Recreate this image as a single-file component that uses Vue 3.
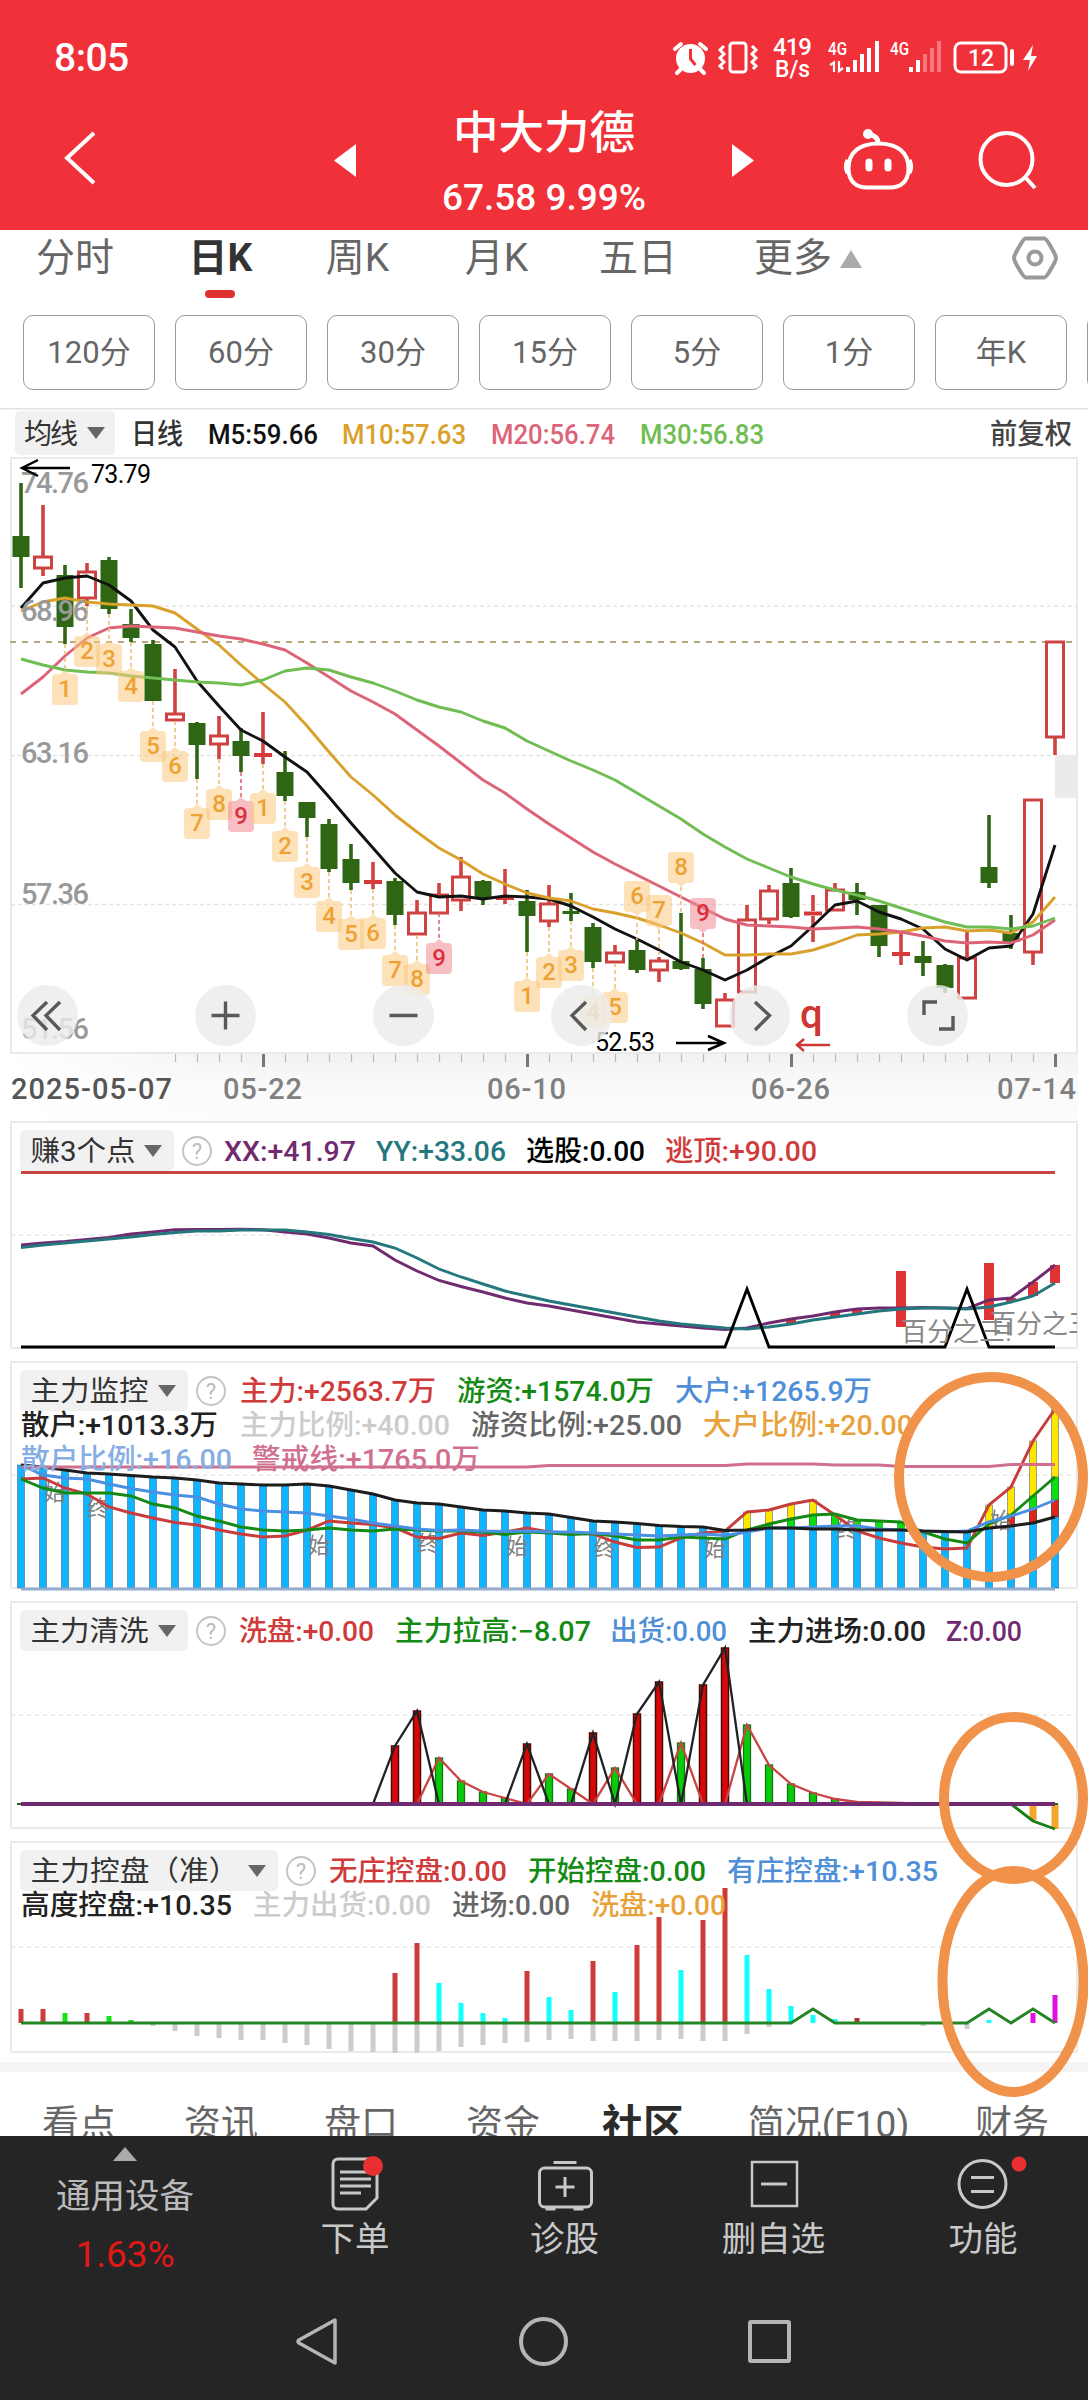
<script setup>
const n = 48
const X = (k) => 21 + 22 * k
const line = (a) => a.map((y, k) => `${X(k)},${y}`).join(' ')

// wick top, wick bottom, body top, body bottom, rising
const candles = [
  [483, 588, 536, 557, 0], [505, 576, 557, 568, 1], [565, 644, 575, 627, 0], [563, 606, 572, 598, 1],
  [557, 614, 560, 609, 0], [609, 642, 624, 638, 0], [640, 701, 644, 701, 0], [669, 721, 714, 720, 1],
  [722, 779, 723, 745, 0], [716, 759, 736, 744, 1], [728, 772, 741, 756, 0], [712, 764, 754, 756, 1],
  [751, 801, 772, 796, 0], [802, 837, 802, 818, 0], [819, 872, 824, 869, 0], [844, 890, 859, 883, 0],
  [862, 889, 881, 883, 1], [878, 925, 881, 915, 0], [900, 935, 913, 934, 1], [883, 913, 895, 913, 1],
  [857, 911, 877, 900, 1], [880, 905, 881, 898, 0], [869, 904, 897, 899, 1], [890, 952, 901, 916, 0],
  [885, 927, 904, 921, 1], [893, 921, 911, 914, 0], [923, 968, 927, 962, 0], [945, 963, 953, 962, 1],
  [940, 973, 950, 970, 0], [957, 982, 961, 970, 1], [913, 970, 961, 969, 0], [958, 1009, 969, 1004, 0],
  [993, 1027, 1000, 1026, 1], [905, 993, 920, 992, 1], [885, 924, 891, 919, 1], [868, 918, 883, 917, 0],
  [895, 942, 911, 916, 1], [883, 911, 890, 910, 1], [883, 915, 892, 900, 0], [905, 957, 905, 946, 0],
  [931, 965, 952, 956, 1], [941, 976, 956, 963, 0], [964, 993, 965, 988, 0], [932, 999, 958, 998, 1],
  [815, 888, 867, 883, 0], [915, 949, 933, 942, 0], [799, 965, 800, 952, 1], [641, 755, 642, 737, 1],
]
const ma = [
  ['#111', [608, 583, 578, 576, 585, 601, 630, 647, 681, 706, 730, 741, 757, 772, 797, 823, 848, 873, 892, 897, 896, 899, 896, 897, 899, 906, 917, 929, 939, 950, 962, 970, 980, 970, 957, 946, 926, 905, 901, 912, 919, 929, 949, 960, 948, 946, 914, 845]],
  ['#d9a02b', [611, 602, 598, 602, 604, 605, 606, 613, 629, 645, 665, 684, 702, 726, 752, 777, 795, 815, 832, 848, 860, 874, 884, 893, 898, 901, 909, 913, 918, 925, 933, 943, 955, 955, 954, 954, 950, 943, 935, 934, 932, 928, 927, 931, 930, 933, 922, 897]],
  ['#dd6478', [694, 677, 656, 638, 628, 626, 627, 628, 632, 636, 639, 644, 650, 663, 677, 691, 702, 714, 730, 746, 763, 780, 793, 809, 824, 838, 852, 864, 875, 886, 897, 908, 919, 925, 926, 927, 929, 928, 927, 929, 932, 936, 941, 943, 942, 943, 935, 920]],
  ['#6fbd53', [659, 665, 670, 672, 673, 676, 678, 680, 682, 683, 685, 680, 671, 668, 670, 677, 683, 691, 700, 707, 712, 721, 728, 741, 751, 761, 770, 780, 793, 806, 819, 834, 847, 859, 868, 877, 884, 890, 895, 901, 908, 915, 922, 927, 927, 929, 926, 918]],
]
// candle index, box bottom, digit
const below = [
  [2, 705, 1], [3, 667, 2], [4, 675, 3], [5, 702, 4], [6, 762, 5], [7, 782, 6], [8, 839, 7], [9, 820, 8], [10, 832, 9],
  [11, 824, 1], [12, 862, 2], [13, 898, 3], [14, 932, 4], [15, 950, 5], [16, 949, 6], [17, 986, 7], [18, 995, 8], [19, 974, 9],
  [23, 1012, 1], [24, 988, 2], [25, 981, 3], [26, 1028, 4], [27, 1023, 5],
]
const above = [[28, 912, 6], [29, 926, 7], [30, 883, 8], [31, 929, 9]]
const tags = [
  ...below.map(([k, b, d]) => ({ x: X(k), b, d, y1: candles[k][1], y2: b - 34, tip: `M-5 ${b - 31}L0 ${b - 35}L5 ${b - 31}z` })),
  ...above.map(([k, b, d]) => ({ x: X(k), b, d, y1: b + 4, y2: candles[k][0], tip: `M-5 ${b}L0 ${b + 4}L5 ${b}z` })),
]
const prices = [['74.76', 493], ['68.96', 621], ['63.16', 763], ['57.36', 904], ['51.56', 1039]]
const dates = [['2025-05-07', 11, 161, '#555'], ['05-22', 223, 79, '#808080'], ['06-10', 487, 79, '#808080'], ['06-26', 751, 79, '#808080'], ['07-14', 997, 79, '#808080']]
const ticks = Array.from({ length: n - 7 }, (_, i) => i + 7)

const R = '#cf3a3a', G = '#148a14', B = '#4f8fd8', K = '#222', P = '#702a70', LG = '#ccc', DG = '#666', O = '#e8a23c'
const maLegend = [['日线', 131, 52, '#333'], ['M5:59.66', 208, 110, '#111'], ['M10:57.63', 342, 124, '#d9a02b'], ['M20:56.74', 491, 124, '#dd6478'], ['M30:56.83', 640, 124, '#6fbd53'], ['前复权', 990, 82, '#444']]

// [text, x, width, baseline, colour]
const panels = [
  { id: 'p1', top: 1121, h: 240, box: 228, grid: 1235, pill: 154, name: '赚3个点', nw: 105,
    legend: [['XX:+41.97', 224, 132, 1161, P], ['YY:+33.06', 376, 130, 1161, '#24777d'], ['选股:0.00', 526, 119, 1161, '#000'], ['逃顶:+90.00', 665, 152, 1161, R]] },
  { id: 'p2', top: 1361, h: 240, box: 228, grid: 1475, pill: 168, name: '主力监控', nw: 118,
    legend: [['主力:+2563.7万', 240, 196, 1401, R], ['游资:+1574.0万', 457, 197, 1401, G], ['大户:+1265.9万', 675, 197, 1401, B],
      ['散户:+1013.3万', 21, 197, 1435, K], ['主力比例:+40.00', 240, 210, 1435, LG], ['游资比例:+25.00', 471, 211, 1435, DG], ['大户比例:+20.00', 703, 210, 1435, O],
      ['散户比例:+16.00', 21, 211, 1469, '#86aee2'], ['警戒线:+1765.0万', 252, 228, 1469, '#d0708e']] },
  { id: 'p3', top: 1601, h: 240, box: 228, grid: 1715, pill: 168, name: '主力清洗', nw: 118,
    legend: [['洗盘:+0.00', 239, 135, 1641, R], ['主力拉高:−8.07', 395, 196, 1641, G], ['出货:0.00', 610, 117, 1641, B], ['主力进场:0.00', 748, 178, 1641, K], ['Z:0.00', 946, 76, 1641, P]] },
  { id: 'p4', top: 1841, h: 221, box: 212, grid: 1947, pill: 258, name: '主力控盘（准）', nw: 208,
    legend: [['无庄控盘:0.00', 329, 178, 1881, R], ['开始控盘:0.00', 528, 178, 1881, G], ['有庄控盘:+10.35', 727, 211, 1881, B],
      ['高度控盘:+10.35', 21, 211, 1915, K], ['主力出货:0.00', 253, 178, 1915, LG], ['进场:0.00', 452, 118, 1915, DG], ['洗盘:+0.00', 591, 135, 1915, O]] },
]

const xx = [1245, 1243, 1241.5, 1239.5, 1237.5, 1234, 1232, 1229.7, 1229.5, 1229.5, 1229.3, 1229.7, 1232, 1234, 1238, 1243, 1246, 1260, 1271, 1280.5, 1286.5, 1292, 1298, 1303, 1306, 1310, 1314, 1318, 1322, 1324, 1326, 1328, 1329.5, 1328, 1323, 1319, 1316, 1312, 1309, 1308, 1308, 1307.5, 1308, 1308.5, 1300, 1298, 1282, 1265]
const yy = [1247.5, 1245, 1243, 1241, 1239, 1237, 1234.5, 1232.5, 1231, 1231, 1230, 1230, 1230, 1232, 1234.5, 1238.5, 1242, 1248, 1258, 1269, 1277, 1284, 1291, 1296, 1301, 1305, 1309, 1313, 1317, 1321, 1324, 1326, 1328, 1329, 1327, 1324, 1320, 1317, 1314, 1311, 1309, 1308, 1308, 1309, 1307, 1302, 1296, 1283]
const peaks = candles.map((_, k) => (k === 33 || k === 43 ? 1289 : 1347))
const gapBars = [[5, 1233, 1238], [35, 1319, 1324], [37, 1312, 1317], [38, 1309, 1314], [40, 1271, 1327], [44, 1263, 1320], [45, 1298, 1302], [46, 1282, 1296], [47, 1265, 1283]]

const retail = [1465, 1467, 1470, 1473, 1474, 1475.5, 1477, 1478, 1480, 1483, 1484, 1485, 1485, 1484, 1486, 1490, 1494, 1500, 1503, 1504, 1507, 1510, 1511, 1513, 1514, 1517.5, 1521, 1522, 1523.5, 1525.5, 1526.5, 1527, 1530.5, 1530, 1528, 1528, 1529, 1529, 1530, 1530, 1530, 1531, 1531.5, 1532, 1528, 1526, 1523, 1517]
const large = [1465, 1475, 1478, 1479, 1484, 1488.5, 1492, 1495, 1497, 1504, 1509, 1511, 1512, 1513, 1516, 1519, 1523, 1526, 1529, 1530.5, 1530, 1531, 1531.5, 1531, 1532, 1532, 1533, 1534, 1535, 1536, 1535, 1534, 1535.5, 1532, 1528, 1528, 1527, 1526, 1526, 1529, 1530, 1531, 1532, 1531, 1522, 1516, 1509, 1500]
const main = [1479, 1478, 1488, 1494, 1507, 1513, 1518, 1522.5, 1525, 1530, 1534, 1537, 1536, 1530, 1521, 1523, 1524.5, 1528, 1537, 1538.5, 1533, 1535.5, 1532, 1528, 1532, 1533, 1534, 1542, 1547.5, 1547, 1538, 1533, 1531, 1512, 1510, 1504, 1500, 1515, 1531, 1538, 1543, 1547, 1549, 1548, 1505, 1487, 1441, 1409]
const hot = [1479, 1488, 1493, 1493, 1493, 1496, 1504, 1508, 1516, 1521, 1527, 1530, 1531, 1530, 1528, 1530, 1531, 1529, 1530, 1531, 1531, 1532, 1534.5, 1532, 1533, 1534.5, 1533.5, 1536, 1540, 1540, 1537, 1538, 1539, 1530, 1524, 1519, 1515, 1514, 1520, 1521, 1522, 1532, 1539, 1543, 1524, 1515, 1496, 1477]
const warn = candles.map((_, k) => (k < 24 ? 1467 : k < 33 ? 1465.5 : k < 37 ? 1464 : k < 40 ? 1465 : k < 45 ? 1466.5 : 1464.5))
const stack = []
for (let k = 0; k < n; k++) {
  const base = retail[k]
  if (main[k] < base) stack.push([k, main[k], base, '#ffe600'])
  if (hot[k] < base && (k < 44 || k > 45)) stack.push([k, hot[k], base, '#0ce00c'])
  if (large[k] < base - 7) stack.push([k, large[k], base, '#e02418'])
  stack.push([k, base, 1588, '#10b4ff'])
}
const marks = [['始', 55, 1500], ['终', 98, 1516], ['始', 319, 1553], ['终', 428, 1551], ['始', 517, 1554], ['终', 605, 1556], ['始', 715, 1556], ['终', 847, 1537], ['始', 1001, 1528]]

const pushes = { 17: 1746, 18: 1711, 23: 1744, 26: 1733, 28: 1714, 29: 1682, 31: 1685, 32: 1648 }
const washes = { 19: 1758, 20: 1781, 21: 1792, 22: 1798, 24: 1774, 25: 1789, 27: 1768, 30: 1743, 33: 1725, 34: 1765, 35: 1784, 36: 1793, 37: 1799, 38: 1802, 39: 1802.5, 40: 1803 }
const pushLine = candles.map((_, k) => pushes[k] ?? 1804)
const washLine = candles.map((_, k) => washes[k] ?? 1804)

const control = [
  [0, 2009, R], [1, 2009, R], [2, 2013, '#12e812'], [3, 2013, R], [4, 2016, '#12e812'], [5, 2020, '#12e812'],
  [17, 1973, R], [18, 1943, R], [23, 1971, R], [26, 1961, R], [28, 1945, R], [29, 1917, R], [31, 1920, R], [32, 1888, R],
  [19, 1983, '#1ff'], [20, 2003, '#1ff'], [21, 2013, '#1ff'], [22, 2018, '#1ff'], [24, 1997, '#1ff'], [25, 2010, '#1ff'], [27, 1992, '#1ff'],
  [30, 1970, '#1ff'], [33, 1955, '#1ff'], [34, 1989, '#1ff'], [35, 2006, '#1ff'], [36, 2015, '#1ff'], [37, 2019, '#1ff'], [44, 2020, '#1ff'],
  [38, 2018, '#a33'], [46, 2013, '#e010e0'], [47, 1995, '#e010e0'],
]
const outflow = { 6: 2026, 7: 2031, 8: 2036, 9: 2038, 10: 2040, 11: 2040, 12: 2043, 13: 2045, 14: 2049, 15: 2051, 16: 2052, 17: 2053, 18: 2053, 19: 2051, 20: 2047, 21: 2045, 22: 2043, 23: 2042, 24: 2040, 25: 2039, 26: 2041, 27: 2041, 28: 2041, 29: 2040, 30: 2039, 31: 2041, 32: 2041, 33: 2034, 34: 2027, 41: 2026, 43: 2029 }
const startLine = candles.map((_, k) => ([36, 44, 46].includes(k) ? 2009 : 2023))

const periods = ['120分', '60分', '30分', '15分', '5分', '1分', '年K', '']
const sections = ['看点', '资讯', '盘口', '资金', '社区', '简况(F10)', '财务']
</script>

<template>
  <div class="page">
    <header class="head">
      <div class="status">
        <span class="time">8:05</span>
        <svg width="428" height="112" viewBox="660 0 428 112" fill="#fff">
          <circle cx="690.500" cy="58.500" r="14.500" />
          <path d="M675 49l6-5M706 49l-6-5M681 69l-4 4M700 69l4 4" stroke="#fff" stroke-width="4" stroke-linecap="round" />
          <path d="M690.500 49v10l5 6" fill="none" stroke="#f13139" stroke-width="3" />
          <rect x="730" y="43" width="16" height="29" rx="3" fill="none" stroke="#fff" stroke-width="3" />
          <path d="M724 46l-4 4 4 4-4 4 4 4-4 4 3 3M752 46l4 4-4 4 4 4-4 4 4 4-3 3" fill="none" stroke="#fff" stroke-width="3" />
          <g class="sb">
            <text x="773" y="55" font-size="24" textLength="39">419</text>
            <text x="775" y="77" font-size="23" textLength="35" lengthAdjust="spacingAndGlyphs">B/s</text>
            <text x="828" y="55" font-size="19" textLength="19" lengthAdjust="spacingAndGlyphs">4G</text>
            <text x="890" y="55" font-size="19" textLength="19" lengthAdjust="spacingAndGlyphs">4G</text>
            <text x="968" y="66" font-size="23" textLength="26">12</text>
          </g>
          <path d="M830 65l4-2.500V72M839 61v10l4-3" stroke="#fff" stroke-width="2.200" fill="none" />
          <path d="M846 67h4v5h-4zM853 60h4v12h-4zM860 54h4v18h-4zM867 48h4v24h-4zM875 41h4v31h-4zM909 67h4v5h-4zM916 60h4v12h-4z" />
          <path opacity=".35" d="M923 54h4v18h-4zM930 48h4v24h-4zM937 41h4v31h-4z" />
          <rect x="955" y="43" width="51" height="29" rx="6" fill="none" stroke="#fff" stroke-width="3" />
          <rect x="1010" y="49" width="4" height="17" rx="2" />
          <path d="M1033 45l-10 15h7l-2 11 9-15h-6z" />
        </svg>
      </div>
      <div class="bar">
        <svg width="160" height="118" viewBox="0 112 160 118"><path d="M94 133L67 158l27 25" fill="none" stroke="#fff" stroke-width="4" /></svg>
        <svg width="240" height="118" viewBox="160 112 240 118"><path d="M334 160.500L356 144v33z" fill="#fff" /></svg>
        <div class="title"><b>中大力德</b><span>67.58 9.99%</span></div>
        <svg width="112" height="118" viewBox="688 112 112 118"><path d="M754 160.500L732 144v33z" fill="#fff" /></svg>
        <svg width="140" height="118" viewBox="800 112 140 118" fill="none" stroke="#fff" stroke-width="4">
          <path d="M878.500 143.500c18 0 30 8 30 25 0 14-9 19-18 19h-24c-9 0-18-5-18-19 0-17 12-25 30-25z" />
          <path d="M848 160c-2 4-2 9 0 13M909 160c2 4 2 9 0 13M878 143c0-5-3-7-9-9" stroke-width="5" />
          <circle cx="868" cy="134" r="3" fill="#fff" />
          <path d="M869 162v6M888 162v6" stroke-width="7" stroke-linecap="round" />
        </svg>
        <svg width="148" height="118" viewBox="940 112 148 118" fill="none" stroke="#fff" stroke-width="4"><circle cx="1006.500" cy="159" r="26" /><path d="M1025 177l10 11" /></svg>
      </div>
    </header>

    <nav class="tabs">
      <span>分时</span><span class="on">日K<i></i></span><span>周K</span><span>月K</span><span>五日</span>
      <span class="more">更多<svg width="22" height="18" viewBox="0 0 22 18"><path d="M11 0L22 18H0z" fill="#aaa" /></svg></span><span></span>
      <svg width="46" height="46" viewBox="-23 -23 46 46" fill="none" stroke="#999" stroke-width="4"><path d="M-9.500-19.500h19c2 0 11.500 16 11.500 19.500S11.500 19.500 9.500 19.500h-19C-11.500 19.500-21 3.500-21 0S-11.500-19.500-9.500-19.500z" /><circle r="6.500" /></svg>
    </nav>
    <div class="periods"><span v-for="(p, i) in periods" :key="i">{{ p }}</span></div>

    <svg class="block" width="1088" height="49" viewBox="0 408 1088 49">
      <path d="M0 408.500H1088" stroke="#e2e2e2" stroke-width="2" />
      <rect x="15" y="411" width="100" height="44" rx="5" fill="#f1f1f1" />
      <text class="lg" x="24" y="444" textLength="54" fill="#333">均线</text>
      <path d="M87 427h18l-9 12z" fill="#666" />
      <text v-for="t in maLegend" :key="t[0]" class="lg md" :x="t[1]" y="444" :textLength="t[2]" lengthAdjust="spacingAndGlyphs" :fill="t[3]">{{ t[0] }}</text>
    </svg>

    <svg class="block" width="1088" height="664" viewBox="0 457 1088 664">
      <defs>
        <linearGradient id="axis" x1="0" y1="0" x2="0" y2="1"><stop offset="0" stop-color="#f1f1f1" /><stop offset=".4" stop-color="#f9f9f9" /><stop offset="1" stop-color="#fcfcfc" /></linearGradient>
        <linearGradient id="fade" x1="0" y1="0" x2="1" y2="0"><stop offset="0" stop-color="#fff" /><stop offset="1" stop-color="#fff" stop-opacity="0" /></linearGradient>
      </defs>
      <rect x="11" y="1053" width="1067" height="68" fill="url(#axis)" />
      <rect x="10" y="1053" width="250" height="68" fill="url(#fade)" />
      <rect x="11" y="458" width="1066" height="595" fill="#fff" stroke="#eaeaea" stroke-width="2" />
      <path d="M11 606H1077M11 755.500H1077M11 904.500H1077" stroke="#e3e3e3" stroke-width="1.500" stroke-dasharray="4 3" />
      <path d="M10 642H1077" stroke="#b5a67c" stroke-width="1.800" stroke-dasharray="6 6" />
      <rect x="1055" y="755" width="22" height="43" fill="#ebebeb" />
      <g v-for="(c, k) in candles" :key="k">
        <template v-if="c[4]">
          <path :d="`M${X(k)} ${c[0]}V${c[2]}M${X(k)} ${c[3]}V${c[1]}`" stroke="#cf4242" stroke-width="3.600" />
          <rect v-if="c[3] - c[2] > 5" :x="X(k) - 8.500" :y="c[2]" width="17" :height="c[3] - c[2]" fill="#fff" stroke="#cf4242" stroke-width="3" />
          <path v-else :d="`M${X(k) - 9} ${(c[2] + c[3]) / 2}h18`" stroke="#d83a3a" stroke-width="4" />
        </template>
        <template v-else>
          <path :d="`M${X(k)} ${c[0]}V${c[1]}`" stroke="#2f6614" stroke-width="3.600" />
          <rect :x="X(k) - 8.500" :y="c[2]" width="17" :height="c[3] - c[2]" fill="#2f6614" />
        </template>
      </g>
      <polyline v-for="m in ma" :key="m[0]" :points="line(m[1])" fill="none" :stroke="m[0]" stroke-width="2.900" stroke-linejoin="round" />
      <g class="num md" fill="#999"><text v-for="p in prices" :key="p[0]" x="21" :y="p[1]" font-size="29" textLength="68">{{ p[0] }}</text></g>
      <g v-for="(t, i) in tags" :key="i" :transform="`translate(${t.x} 0)`">
        <path :d="`M0 ${t.y1}V${t.y2}`" :stroke="t.d === 9 ? '#dd6a74' : '#ecc27a'" stroke-width="1.600" stroke-dasharray="4 3" />
        <g :fill="t.d === 9 ? '#f08b93' : '#fcc880'" fill-opacity=".55"><rect x="-13" :y="t.b - 31" width="26" height="31" rx="4" /><path :d="t.tip" /></g>
        <text class="lg md" :y="t.b - 8" text-anchor="middle" font-size="24" :fill="t.d === 9 ? '#d8303c' : '#eda233'">{{ t.d }}</text>
      </g>
      <g class="num" font-size="25"><text x="91" y="483" textLength="60">73.79</text><text x="595" y="1051" textLength="60">52.53</text></g>
      <path d="M70 468H22M38 460L22 468l16 8M676 1043h48M708 1036l16 7-16 7" fill="none" stroke="#000" stroke-width="2.500" />
      <text class="lg md" x="800" y="1028" font-size="40" fill="#cf3636">q</text>
      <path d="M830 1045H797M804 1039l-7 6 7 6" fill="none" stroke="#cf3636" stroke-width="2.400" />
      <g fill="#ebebeb" fill-opacity=".82"><circle v-for="i in 6" :key="i" :cx="47.500 + 178 * (i - 1)" cy="1015.500" r="30.500" /></g>
      <path d="M47 1002L33 1015.500 47 1030M60 1002L46 1015.500 60 1030M211.500 1015.500h28M225.500 1001.500v28M389.500 1015.500h28M586 1002l-14 13.500L586 1030M755 1002l14.500 13.500L755 1030M924 1015v-13h13M953 1016v13h-14" fill="none" stroke="#595959" stroke-width="3.400" />
      <path v-for="k in ticks" :key="k" :d="`M${X(k) + .5} 1054v${k % 12 === 11 ? 13 : 8}`" :stroke="k % 12 === 11 ? '#777' : '#bbb'" :stroke-width="k % 12 === 11 ? 3 : 1.200" />
      <g class="num md"><text v-for="d in dates" :key="d[0]" :x="d[1]" y="1099" font-size="29" :textLength="d[2]" :fill="d[3]">{{ d[0] }}</text></g>
    </svg>

    <svg v-for="p in panels" :key="p.id" class="block" width="1088" :height="p.h" :viewBox="`0 ${p.top} 1088 ${p.h}`">
      <rect x="11" :y="p.top + 1" width="1066" :height="p.box - 2" fill="#fff" stroke="#eaeaea" stroke-width="2" />
      <path :d="`M11 ${p.grid}H1077`" stroke="#e6e6e6" stroke-width="1.500" stroke-dasharray="4 4" />

      <g v-if="p.id === 'p1'">
        <path d="M21 1172.500H1055" stroke="#c64545" stroke-width="3" />
        <rect v-for="b in gapBars" :key="b[0]" :x="X(b[0]) - 5" :y="b[1]" width="10" :height="b[2] - b[1]" fill="#e03434" />
        <polyline class="ln" :points="line(xx)" stroke="#702a70" /><polyline class="ln" :points="line(yy)" stroke="#24777d" />
        <polyline class="ln" :points="line(peaks)" stroke="#000" stroke-linejoin="miter" />
        <svg x="880" y="1290" width="197" height="60" viewBox="880 1290 197 60" class="lg" fill="#888">
          <text x="901" y="1341" font-size="26">百分之三!</text><text x="990" y="1333" font-size="26">百分之三!</text>
        </svg>
      </g>
      <g v-else-if="p.id === 'p2'">
        <rect v-for="(s, i) in stack" :key="i" :x="X(s[0]) - 3.500" :y="s[1]" width="7" :height="s[2] - s[1]" :fill="s[3]" stroke="#246" stroke-opacity=".45" stroke-width="1" />
        <path d="M21 1589H1055" stroke="#92add0" stroke-width="3" />
        <g class="lg" fill="#808080"><text v-for="m in marks" :key="m[1]" :x="m[1]" :y="m[2]" text-anchor="middle" font-size="22">{{ m[0] }}</text></g>
        <polyline class="ln" :points="line(main)" stroke="#c83c3c" /><polyline class="ln" :points="line(hot)" stroke="#148a14" />
        <polyline class="ln" :points="line(large)" stroke="#4a90e2" /><polyline class="ln" :points="line(retail)" stroke="#1d1d1d" />
        <polyline class="ln" :points="line(warn)" stroke="#d0708e" />
      </g>
      <g v-else-if="p.id === 'p3'">
        <rect v-for="(y, k) in pushes" :key="k" :x="X(+k) - 3.500" :y="y" width="7" :height="1804 - y" fill="#d80808" stroke="#4a0a0a" stroke-width="1.500" />
        <rect v-for="(y, k) in washes" :key="k" :x="X(+k) - 3.500" :y="y" width="7" :height="1804 - y" fill="#08cc08" stroke="#1a701a" stroke-width="1.300" />
        <path d="M1033 1804v16M1055 1804v25" stroke="#f4a62c" stroke-width="7" />
        <polyline class="ln thin" :points="line(washLine)" stroke="#c94444" /><polyline class="ln thin" :points="line(pushLine)" stroke="#222" />
        <path class="ln" d="M1011 1804l22 17 22 8" stroke="#168016" />
        <path d="M17 1804H1058" stroke="#1c6b1c" stroke-width="2" /><path d="M21 1804H1055" stroke="#702a70" stroke-width="4" />
      </g>
      <g v-else>
        <rect v-for="(y, k) in outflow" :key="k" :x="X(+k) - 2.500" y="2024" width="5" :height="y - 2024" fill="#ccc" />
        <rect v-for="c in control" :key="c[0]" :x="X(c[0]) - 2.500" :y="c[1]" width="5" :height="2023 - c[1]" :fill="c[2]" />
        <polyline class="ln" :points="line(startLine)" stroke="#248524" stroke-linejoin="miter" />
      </g>

      <rect x="20" :y="p.top + 9" :width="p.pill" height="41" rx="5" fill="#f1f1f1" />
      <text class="lg" x="30.500" :y="p.top + 40" :textLength="p.nw" lengthAdjust="spacingAndGlyphs" fill="#333">{{ p.name }}</text>
      <path :d="`M${p.pill - 10} ${p.top + 24}h18l-9 12z`" fill="#666" />
      <circle :cx="p.pill + 43" :cy="p.top + 30" r="14" fill="none" stroke="#c4c4c4" stroke-width="2" />
      <text class="lg" :x="p.pill + 43" :y="p.top + 38" text-anchor="middle" font-size="22" fill="#bbb">?</text>
      <text v-for="t in p.legend" :key="t[0]" class="lg md" :x="t[1]" :y="t[3]" :textLength="t[2]" lengthAdjust="spacingAndGlyphs" :fill="t[4]">{{ t[0] }}</text>
    </svg>

    <div class="strip"></div>
    <nav class="sections"><span v-for="s in sections" :key="s" :class="{ on: s === '社区' }">{{ s }}</span></nav>

    <footer class="foot">
      <div class="actions">
        <div class="device">
          <svg width="24" height="14" viewBox="0 0 24 14"><path d="M12 0l12 14H0z" fill="#aaa" /></svg>
          <span>通用设备</span><em>1.63%</em>
        </div>
        <div class="act">
          <svg width="80" height="64" viewBox="315 2152 80 64" fill="none" stroke="#c8c8c8" stroke-width="3">
            <path d="M338 2159h34c3 0 5 2 5 5v34l-11 11h-28c-3 0-5-2-5-5v-40c0-3 2-5 5-5zM340 2172h31M340 2179h31M340 2186h31M340 2193h21" /><circle cx="373" cy="2166" r="10" fill="#e83030" stroke="none" />
          </svg><span>下单</span>
        </div>
        <div class="act">
          <svg width="80" height="64" viewBox="524.500 2152 80 64" fill="none" stroke="#c8c8c8" stroke-width="3">
            <rect x="539" y="2168" width="52" height="39" rx="5" /><path d="M553 2162.500h23M564.500 2177v20M555 2187h19M545 2209h10M573 2209h10" />
          </svg><span>诊股</span>
        </div>
        <div class="act">
          <svg width="80" height="64" viewBox="733 2152 80 64" fill="none" stroke="#c8c8c8" stroke-width="2.500"><rect x="751" y="2162" width="45" height="44" /><path d="M760 2184h26" stroke-width="3" /></svg><span>删自选</span>
        </div>
        <div class="act">
          <svg width="90" height="64" viewBox="938 2152 90 64" fill="none" stroke="#c8c8c8" stroke-width="3"><circle cx="982.500" cy="2184" r="23.500" /><path d="M971 2177.500h23M971 2191.500h23" /><circle cx="1019" cy="2164" r="7.500" fill="#e83030" stroke="none" /></svg><span>功能</span>
        </div>
      </div>
      <svg class="block" width="1088" height="118" viewBox="0 2282 1088 118" fill="none" stroke="#b5b5b5" stroke-width="4" stroke-linejoin="round">
        <path d="M335 2320v43l-36-20q-2-1.500 0-3z" stroke-width="3.500" /><circle cx="543.500" cy="2341.500" r="22.500" /><rect x="750" y="2322" width="39" height="39" rx="1" />
      </svg>
    </footer>

    <svg class="rings" width="1088" height="2400" viewBox="0 0 1088 2400" fill="none" stroke="#f0924a" stroke-width="10">
      <ellipse cx="991" cy="1477" rx="92" ry="100" /><ellipse cx="1013.500" cy="1798" rx="69.500" ry="81" /><ellipse cx="1013" cy="1981.500" rx="70.500" ry="110.500" />
    </svg>
  </div>
</template>

<style>
body { margin: 0; background: #fff; }
</style>

<style scoped>
.page { position: relative; display: flex; flex-direction: column; width: 1088px; height: 2400px; overflow: hidden; background: #fff; font-family: Roboto, "Noto Sans CJK SC", sans-serif; }
.page svg { display: block; flex: none; }
.block { display: block; }
.head { height: 230px; background: #f13139; color: #fff; }
.status { display: flex; justify-content: space-between; height: 112px; }
.time { padding-left: 54px; font-size: 39px; font-weight: 500; line-height: 117px; letter-spacing: -0.5px; }
.bar { display: flex; height: 118px; }
.title { display: flex; flex-direction: column; align-items: center; width: 288px; height: 118px; }
.title b { margin-top: -7px; font-size: 45.5px; font-weight: 500; line-height: 58px; }
.title span { margin-top: 11px; font-size: 37px; font-weight: 500; line-height: 47px; white-space: nowrap; }
.sb { font-weight: 500; }
.tabs { display: grid; grid-template-columns: 150px 141px 133px 145px 138px 202px 73px 106px; height: 85px; justify-items: center; align-items: start; color: #666; font-size: 39px; line-height: 57px; }
.tabs .on { display: flex; flex-direction: column; align-items: center; color: #333; font-weight: 700; }
.tabs .on i { width: 30px; height: 8px; margin-top: 3px; border-radius: 4px; background: #e03131; }
.tabs .more { display: flex; align-items: center; gap: 8px; }
.tabs > svg { margin-top: 5px; }
.periods { display: flex; gap: 20px; height: 93px; padding-left: 23px; }
.periods span { flex: 0 0 132px; box-sizing: border-box; height: 75px; border: 1.5px solid #999; border-radius: 10px; color: #666; font-size: 31px; line-height: 74px; text-align: center; }
.lg { font-family: Roboto, "Noto Sans CJK SC", sans-serif; font-size: 28px; }
.lg[font-size="22"], .lg text[font-size="22"] { font-size: 22px; }
.lg[font-size="24"] { font-size: 24px; }
.lg[font-size="40"] { font-size: 40px; }
.md { font-weight: 500; }
.num { font-family: Roboto, sans-serif; }
.ln { fill: none; stroke-width: 2.9; }
.thin { stroke-width: 2.3; }
.strip { height: 10px; background: #f4f4f4; }
.sections { display: grid; grid-template-columns: 158px 126px 154px 130px 150px 221px 146px; height: 64px; overflow: hidden; justify-items: center; align-items: start; color: #666; font-size: 37px; line-height: 54px; }
.sections span { margin-top: 26px; }
.sections .on { color: #2c2c2c; font-size: 41px; font-weight: 700; }
.foot { height: 264px; background: #252525; color: #c8c8c8; }
.actions { display: grid; grid-template-columns: 250px 210px 209px 209px 210px; height: 146px; font-size: 34.5px; }
.device { display: flex; flex-direction: column; align-items: center; padding-top: 11px; color: #bbb; box-sizing: border-box; height: 146px; }
.device span { margin-top: 11px; line-height: 48px; }
.device em { margin-top: 12px; color: #e01818; font-size: 37px; font-style: normal; line-height: 46px; }
.act { display: flex; flex-direction: column; align-items: center; padding-top: 16px; }
.act span { line-height: 47px; }
.rings { position: absolute; left: 0; top: 0; pointer-events: none; }
</style>
